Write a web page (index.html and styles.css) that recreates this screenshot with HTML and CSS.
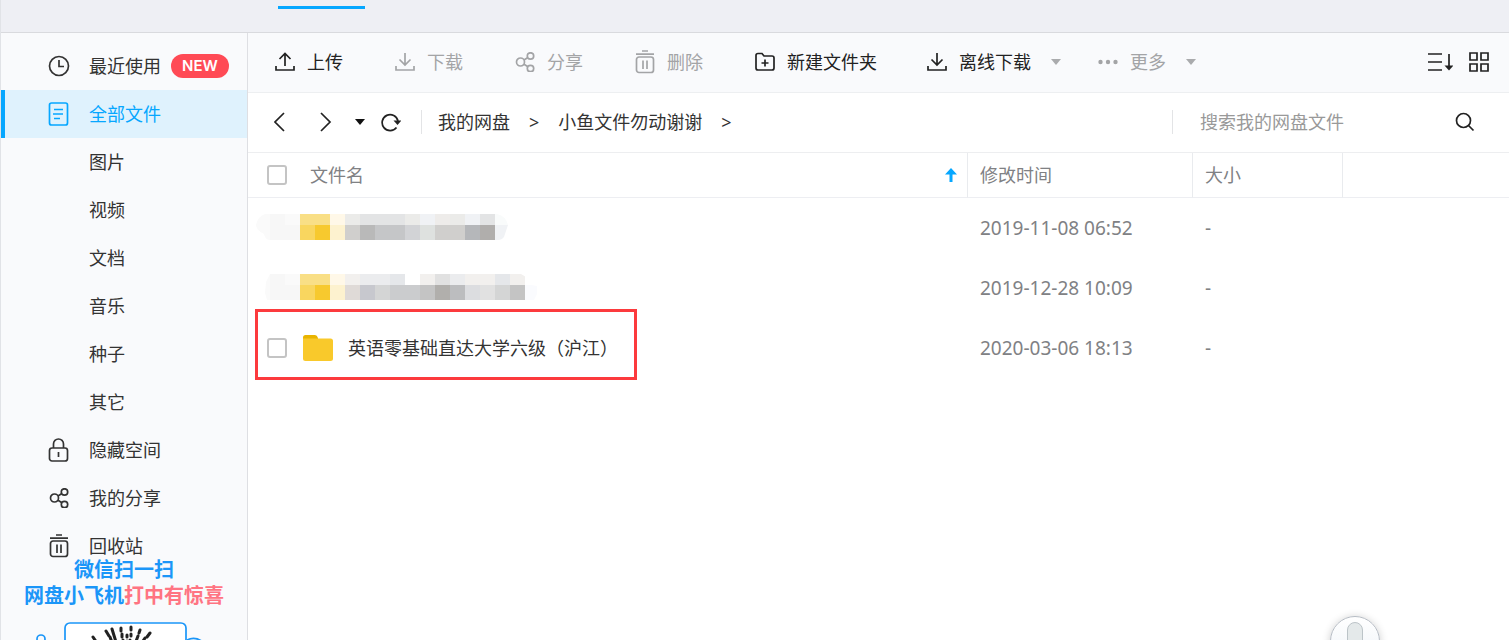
FILE: index.html
```html
<!DOCTYPE html>
<html lang="zh-CN">
<head>
    <meta charset="UTF-8">
    <meta name="viewport" content="width=device-width, initial-scale=1.0">
    <title>我的网盘</title>
    <link rel="stylesheet" href="styles.css">
</head>
<body>
    <!-- Shared icons -->
    <svg width="0" height="0" class="sprite">
        <symbol id="share" viewBox="0 0 20 20">
            <circle cx="5.500" cy="10" r="4"/>
            <circle cx="15.500" cy="4" r="3.200"/>
            <circle cx="15.500" cy="16.500" r="3.200"/>
            <path d="M9 8l3.500-2.200M9 12.200l3.600 2.300"/>
        </symbol>
        <symbol id="trash" viewBox="0 0 20 24">
            <path d="M7 1h6M1 4.200h18M8 10.500v8.500M12 10.500v8.500"/>
            <rect x="1.500" y="7" width="17" height="15.500" rx="2.500"/>
        </symbol>
        <symbol id="download" viewBox="0 0 20 20">
            <path d="M1 14v4h18v-4M10 1v12M4.500 7.500L10 13l5.500-5.500"/>
        </symbol>
    </svg>

    <header class="topbar">
        <div class="tab-line"></div>
    </header>

    <div class="content">
        <!-- Sidebar -->
        <aside class="sidebar">
            <nav class="menu">
                <a href="#">
                    <svg class="icon" viewBox="0 0 22 22"><circle cx="11" cy="11" r="9.500"/><path d="M11 5v6.500h5"/></svg>
                    最近使用 <span class="badge">NEW</span>
                </a>
                <a href="#" class="active">
                    <svg class="icon tall" viewBox="0 0 22 26"><rect x="1.500" y="2" width="18" height="22" rx="2"/><path d="M6 8.500h9M5 13h10M6 17.500h6"/></svg>
                    全部文件
                </a>
                <a href="#" class="sub">图片</a>
                <a href="#" class="sub">视频</a>
                <a href="#" class="sub">文档</a>
                <a href="#" class="sub">音乐</a>
                <a href="#" class="sub">种子</a>
                <a href="#" class="sub">其它</a>
                <a href="#">
                    <svg class="icon tall" viewBox="0 0 22 26"><rect x="1.500" y="11" width="18" height="13" rx="2.500"/><path d="M5.500 11V7a5 5 0 0 1 10 0v4M10.500 15v5"/></svg>
                    隐藏空间
                </a>
                <a href="#">
                    <svg class="icon" viewBox="0 0 22 22"><use href="#share" x="1" y="1" width="20" height="20"/></svg>
                    我的分享
                </a>
                <a href="#">
                    <svg class="icon tall" viewBox="0 0 22 26"><use href="#trash" x="1" y="1" width="20" height="24"/></svg>
                    回收站
                </a>
            </nav>
            <div class="promo">
                <p>微信扫一扫</p>
                <p>网盘小飞机<span>打中有惊喜</span></p>
                <svg class="promo-code" viewBox="0 0 246 80">
                    <circle cx="40" cy="20" r="4"/>
                    <path d="M186 21q8-4 16 2"/>
                    <rect x="64" y="4" width="121" height="90" rx="5" class="card"/>
                    <g class="rays">
                        <path d="M92 18l4 6M98 27l3 4"/>
                        <path d="M105 12l3 5M109 18l3 8"/>
                        <path d="M111 10l4 13"/>
                        <path d="M120 9v3M121 15v3M122 21v8" />
                        <path d="M126 16v2M126 22v3"/>
                        <path d="M130 8v3M130 15v2M129 21v5"/>
                        <path d="M139 11l-1 3M137 17l-3 8"/>
                        <path d="M149 14l-3 4M144 19l-4 6"/>
                    </g>
                </svg>
            </div>
        </aside>

        <main class="main">
            <!-- Toolbar -->
            <div class="toolbar">
                <div class="actions">
                    <button><svg class="tool"><path d="M1 14v4h18v-4M10 14V1.500M4.500 7L10 1.500 15.500 7"/></svg>上传</button>
                    <button disabled><svg class="tool"><use href="#download"/></svg>下载</button>
                    <button disabled><svg class="tool"><use href="#share"/></svg>分享</button>
                    <button disabled><svg class="tool tall"><use href="#trash"/></svg>删除</button>
                    <button><svg class="tool"><path d="M1 16V3.500q0-2 2-2h4l2 2.500h8q2 0 2 2v10q0 2-2 2H3q-2 0-2-2zM10 7.500v7M6.500 11h7"/></svg>新建文件夹</button>
                </div>
                <div class="dropdowns">
                    <button><svg class="tool"><use href="#download"/></svg>离线下载<span class="caret"></span></button>
                    <button disabled><svg class="tool dots"><circle cx="2.500" cy="10" r="2.200"/><circle cx="10" cy="10" r="2.200"/><circle cx="17.500" cy="10" r="2.200"/></svg>更多<span class="caret"></span></button>
                </div>
                <div class="views">
                    <button aria-label="排序"><svg class="sort" viewBox="0 0 25 20"><path d="M0 2h14M0 10h14M0 18h14M21 2v15"/><path d="M16.500 13.500h9L21 18.500z" class="solid"/></svg></button>
                    <button aria-label="网格"><svg class="tool"><path d="M1 1h7v7H1zM12 1h7v7h-7zM1 12h7v7H1zM12 12h7v7h-7z"/></svg></button>
                </div>
            </div>

            <!-- Path and search -->
            <div class="pathbar">
                <div class="history">
                    <button aria-label="后退"><svg class="arrow"><path d="M10 1L1 10l9 9"/></svg></button>
                    <button aria-label="前进"><svg class="arrow"><path d="M1 1l9 9-9 9"/></svg></button>
                </div>
                <button aria-label="历史记录" class="recent"><span class="caret"></span></button>
                <button aria-label="刷新" class="refresh"><svg class="tool"><path d="M15.500 15.500A8 8 0 1 1 17 9"/><path d="M12.500 8.500h8l-4 4.500z" class="solid"/></svg></button>
                <div class="crumbs">
                    <a href="#">我的网盘</a><span>&gt;</span><a href="#">小鱼文件勿动谢谢</a><span>&gt;</span>
                </div>
                <form class="search">
                    <input type="text" placeholder="搜索我的网盘文件" aria-label="搜索我的网盘文件">
                    <button type="button" aria-label="搜索"><svg class="tool"><circle cx="8.500" cy="8.500" r="7"/><path d="M13.500 13.500l5 5"/></svg></button>
                </form>
            </div>

            <!-- File list -->
            <table class="files">
                <thead>
                    <tr>
                        <th class="col-name">
                            <div class="name-head">
                                <input type="checkbox" aria-label="全选">
                                <span>文件名</span>
                                <svg class="up" viewBox="0 0 12 14"><path d="M6 0l6 6.500H7.500V14h-3V6.500H0z"/></svg>
                            </div>
                        </th>
                        <th class="col-date">修改时间</th>
                        <th class="col-size">大小</th>
                        <th class="col-rest"></th>
                    </tr>
                </thead>
                <tbody>
                    <tr>
                        <td>
                            <svg class="mosaic" viewBox="0 0 285 30" role="img" aria-label="文件夹">
                                <clipPath id="blob1"><path d="M10 2h232q9 2 11 11l-4 12q-2 3-5 3H14q-4-1-5-6Q1 18 1 13 3 4 10 2z"/></clipPath>
                                <g clip-path="url(#blob1)">
                                    <path fill="#fafafa" d="M0 2h15v26H0zM30 2h15v11H30z"/>
                                    <path fill="#f7f7f7" d="M15 2h15v26H15zM30 13h15v15H30z"/>
                                    <path fill="#f9df86" d="M45 2h30v11H45z"/>
                                    <path fill="#f9d65f" d="M45 13h15v15H45z"/>
                                    <path fill="#f7c92e" d="M60 13h15v15H60z"/>
                                    <path fill="#fff8e8" d="M75 2h15v11H75z"/>
                                    <path fill="#fdf2cf" d="M75 13h15v15H75z"/>
                                    <path fill="#ebebe9" d="M90 2h15v11H90zM150 2h15v11h-15zM195 2h15v11h-15z"/>
                                    <path fill="#e3e4e5" d="M105 2h45v11h-45zM225 2h15v11h-15z"/>
                                    <path fill="#f0f2f5" d="M165 2h15v11h-15zM210 2h15v11h-15zM240 13h15v15h-15z"/>
                                    <path fill="#eeecea" d="M180 2h15v11h-15z"/>
                                    <path fill="#f9fbfb" d="M240 2h15v11h-15z"/>
                                    <path fill="#d0cfcd" d="M90 13h15v15H90zM180 13h30v15h-30z"/>
                                    <path fill="#b9b9b9" d="M105 13h15v15h-15z"/>
                                    <path fill="#c5c6c8" d="M120 13h30v15h-30z"/>
                                    <path fill="#d2d3d6" d="M150 13h15v15h-15z"/>
                                    <path fill="#dee1df" d="M165 13h15v15h-15z"/>
                                    <path fill="#b5b7ba" d="M210 13h15v15h-15z"/>
                                    <path fill="#b0aeac" d="M225 13h15v15h-15z"/>
                                </g>
                            </svg>
                        </td>
                        <td>2019-11-08 06:52</td>
                        <td>-</td>
                        <td></td>
                    </tr>
                    <tr>
                        <td>
                            <svg class="mosaic" viewBox="0 0 285 30" role="img" aria-label="文件夹">
                                <clipPath id="blob2"><path d="M15 2h251l5 3v7l11 2v8l-3 6H12l-2-7 1-11z"/></clipPath>
                                <g clip-path="url(#blob2)">
                                    <path fill="#fafafa" d="M0 2h15v26H0zM30 2h15v11H30z"/>
                                    <path fill="#f7f7f7" d="M15 2h15v26H15zM30 13h15v15H30z"/>
                                    <path fill="#f9df86" d="M45 2h30v11H45z"/>
                                    <path fill="#f9d65f" d="M45 13h15v15H45z"/>
                                    <path fill="#f7c92e" d="M60 13h15v15H60z"/>
                                    <path fill="#fff8e8" d="M75 2h15v11H75z"/>
                                    <path fill="#fdf2cf" d="M75 13h15v15H75z"/>
                                    <path fill="#f2f0ee" d="M90 2h15v11H90zM165 2h15v11h-15zM210 2h30v11h-30zM255 2h15v11h-15z"/>
                                    <path fill="#ebecee" d="M105 2h30v11h-30zM195 2h15v11h-15z"/>
                                    <path fill="#e5e7ea" d="M135 2h15v11h-15zM240 2h15v11h-15z"/>
                                    <path fill="#e1e1e1" d="M180 2h15v11h-15zM225 13h15v15h-15z"/>
                                    <path fill="#dfdad7" d="M90 13h15v15H90z"/>
                                    <path fill="#c7c8ce" d="M105 13h15v15h-15z"/>
                                    <path fill="#d4d5d5" d="M120 13h15v15h-15zM240 13h15v15h-15z"/>
                                    <path fill="#cbccce" d="M135 13h30v15h-30z"/>
                                    <path fill="#c4c4c4" d="M165 13h15v15h-15zM255 13h15v15h-15z"/>
                                    <path fill="#b1afac" d="M180 13h15v15h-15z"/>
                                    <path fill="#bcbdbf" d="M195 13h15v15h-15z"/>
                                    <path fill="#dcdde0" d="M210 13h15v15h-15z"/>
                                    <path fill="#fafbfe" d="M270 13h15v15h-15z"/>
                                </g>
                            </svg>
                        </td>
                        <td>2019-12-28 10:09</td>
                        <td>-</td>
                        <td></td>
                    </tr>
                    <tr>
                        <td class="marked">
                            <div class="file">
                                <input type="checkbox" id="file3">
                                <svg class="folder" viewBox="0 0 30 26"><path d="M0 2.500Q0 0 2.500 0H12q2 0 3 3v6H0z" fill="#e9b400"/><path d="M0 3.500h27.500q2.500 0 2.500 2.500v17.500q0 2.500-2.500 2.500h-25Q0 26 0 23.500z" fill="#f9c92b"/></svg>
                                <label for="file3">英语零基础直达大学六级（沪江）</label>
                            </div>
                        </td>
                        <td>2020-03-06 18:13</td>
                        <td>-</td>
                        <td></td>
                    </tr>
                </tbody>
            </table>
        </main>
    </div>

    <button class="mic" aria-label="语音"><span></span></button>
</body>
</html>
```
FILE: styles.css
```css
*,
*::after {
    box-sizing: border-box;
}
body {
    margin: 0;
    height: 100vh;
    display: flex;
    flex-direction: column;
    overflow: hidden;
    position: relative;
    border-left: 1px solid #e1e3e7;
    background: #fff;
    color: #333;
    font-family: "Noto Sans", "Noto Sans CJK SC", sans-serif;
    font-size: 18px;
    line-height: 24px;
}
a {
    color: inherit;
    text-decoration: none;
}
button {
    display: flex;
    align-items: center;
    padding: 0;
    border: none;
    background: none;
    color: #222;
    font: inherit;
    cursor: pointer;
}
button:disabled {
    color: #a3a4a6;
}
svg {
    flex: none;
    fill: none;
    stroke: currentColor;
    stroke-width: 1.7;
}
.sprite {
    position: absolute;
}
.solid {
    fill: currentColor;
    stroke: none;
}
.topbar {
    flex: none;
    height: 33px;
    padding: 6px 277px;
    background: #eeeff4;
    border-bottom: 1px solid #d9dade;
}
.tab-line {
    width: 87px;
    height: 3px;
    background: #06a7ff;
}
.content {
    flex: 1;
    display: flex;
    min-height: 0;
}

/* Sidebar */
.sidebar {
    flex: none;
    width: 247px;
    padding-top: 9px;
    overflow: hidden;
    background: #f9fafc;
    border-right: 1px solid #dedfe3;
}
.menu a {
    display: flex;
    align-items: center;
    height: 48px;
    padding-left: 47px;
}
.menu .sub {
    padding-left: 88px;
}
.menu .active {
    padding-left: 43px;
    border-left: 4px solid #06a7ff;
    background: #dff2fd;
    color: #06a7ff;
}
.icon {
    width: 22px;
    height: 22px;
    margin-right: 19px;
}
.icon.tall {
    height: 26px;
}
.badge {
    margin-left: 10px;
    padding: 0 11px;
    border-radius: 12px;
    background: #ff4a55;
    color: #fff;
    font-family: Inter, sans-serif;
    font-size: 15px;
    font-weight: 600;
}
.promo {
    margin-top: -13px;
    color: #1b96f8;
    font-size: 20px;
    font-weight: 700;
    line-height: 26px;
    text-align: center;
}
.promo p {
    margin: 0;
}
.promo span {
    color: #ff7482;
}
.promo-code {
    display: block;
    width: 100%;
    margin-top: 10px;
}
.promo-code .card {
    fill: #fff;
}
.promo-code .rays {
    stroke: #222;
    stroke-width: 3;
    stroke-linecap: round;
}

/* Toolbar */
.main {
    flex: 1;
    min-width: 0;
}
.toolbar {
    display: flex;
    align-items: center;
    height: 60px;
    padding: 0 20px 2px 27px;
    background: #f9fafc;
    border-bottom: 1px solid #edeff1;
}
.actions {
    display: flex;
    gap: 52px;
}
.dropdowns {
    display: flex;
    gap: 37px;
    margin-left: 50px;
}
.actions button,
.dropdowns button {
    gap: 12px;
}
.tool {
    width: 20px;
    height: 20px;
}
.tool.tall {
    height: 24px;
}
.dots {
    fill: currentColor;
    stroke: none;
}
.caret {
    border: 5px solid transparent;
    border-top: 6px solid #aaabad;
    border-bottom: none;
}
.dropdowns .caret {
    margin-left: 8px;
}
.views {
    display: flex;
    gap: 16px;
    margin-left: auto;
}
.sort {
    width: 25px;
    height: 20px;
}

/* Path bar */
.pathbar {
    display: flex;
    align-items: center;
    height: 60px;
    padding: 0 34px 2px 26px;
    border-bottom: 1px solid #edeef0;
}
.history {
    display: flex;
    gap: 34px;
}
.arrow {
    width: 12px;
    height: 20px;
}
.recent {
    margin-left: 23px;
}
.recent .caret {
    border-top-color: #111;
}
.refresh {
    margin-left: 16px;
}
.crumbs {
    display: flex;
    gap: 19px;
    margin-left: 20px;
    padding-left: 16px;
    border-left: 1px solid #e3e4e6;
}
.search {
    display: flex;
    width: 303px;
    margin-left: auto;
    padding-left: 27px;
    border-left: 1px solid #e3e4e6;
}
.search input {
    flex: 1;
    min-width: 0;
    height: 24px;
    padding: 0;
    border: none;
    outline: none;
    background: none;
    font: inherit;
}
.search input::placeholder {
    color: #999;
}

/* File list */
.files {
    width: 100%;
    table-layout: fixed;
    border-collapse: separate;
    border-spacing: 0;
    color: #808184;
}
.files th {
    height: 45px;
    padding: 0 12px;
    border-right: 1px solid #e9ebee;
    border-bottom: 1px solid #edeef2;
    font-weight: 400;
    text-align: left;
}
.files th:last-child {
    border-right: none;
}
.files td {
    height: 60px;
    padding: 0 12px;
    font-size: 19px;
}
.files .col-name {
    width: 720px;
    padding: 0 10px 0 19px;
}
.col-date {
    width: 225px;
}
.col-size {
    width: 150px;
}
.name-head {
    display: flex;
    align-items: center;
    gap: 23px;
}
input[type="checkbox"] {
    appearance: none;
    flex: none;
    width: 20px;
    height: 20px;
    margin: 0;
    border: 2px solid #c4c4c4;
    border-radius: 3px;
    background: #fff;
}
input[type="checkbox"]:checked {
    background: #06a7ff;
}
.up {
    width: 12px;
    height: 14px;
    margin-left: auto;
    fill: #06a7ff;
    stroke: none;
}
.files td:first-child {
    padding: 0 7px;
}
.mosaic {
    display: block;
    width: 285px;
    height: 30px;
    margin-bottom: 2px;
    stroke: none;
    shape-rendering: crispEdges;
}
.marked {
    position: relative;
}
.marked::after {
    content: "";
    position: absolute;
    left: 7px;
    top: -9px;
    width: 382px;
    height: 71px;
    border: 3px solid #fc3a3d;
    pointer-events: none;
}
.file {
    display: flex;
    align-items: center;
    padding-left: 12px;
    color: #333;
    font-size: 18px;
}
.folder {
    width: 30px;
    height: 26px;
    margin: 0 15px 0 16px;
    stroke: none;
}

/* Voice button */
.mic {
    position: absolute;
    right: 129px;
    bottom: -26px;
    justify-content: center;
    width: 50px;
    height: 50px;
    border: 1px solid #b6bcc4;
    border-radius: 50%;
    background: linear-gradient(#fff, #eef3f8);
    box-shadow: 0 1px 8px rgba(0, 0, 0, 0.2);
}
.mic span {
    width: 16px;
    height: 38px;
    border: 1px solid #bcc4c8;
    border-radius: 8px;
    background: #e4e9ea;
}
```
